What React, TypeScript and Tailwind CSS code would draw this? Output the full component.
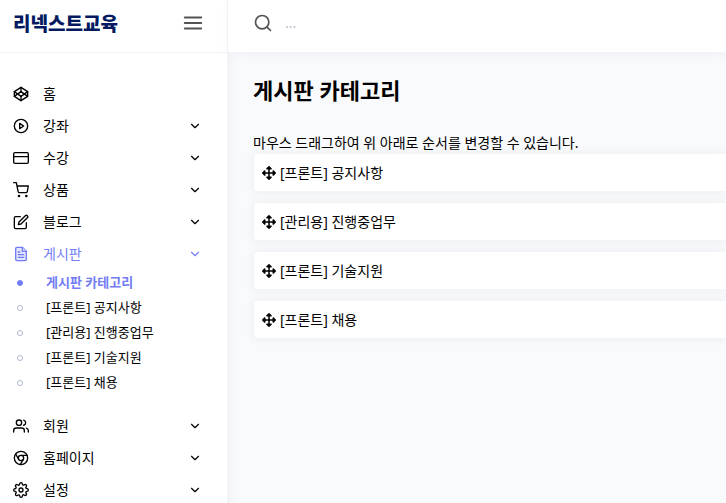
import { useState } from "react";
import type { IconType } from "react-icons";
import {
  FiChevronDown,
  FiChrome,
  FiCodepen,
  FiCreditCard,
  FiEdit,
  FiFileText,
  FiMenu,
  FiPlayCircle,
  FiSearch,
  FiSettings,
  FiShoppingCart,
  FiUsers,
} from "react-icons/fi";
import { FaArrowsAlt } from "react-icons/fa";
import clsx from "clsx";

interface MenuItem {
  label: string;
  icon: IconType;
  expandable?: boolean;
  children?: string[];
}

const boards = [
  "[프론트] 공지사항",
  "[관리용] 진행중업무",
  "[프론트] 기술지원",
  "[프론트] 채용",
];

const menu: MenuItem[] = [
  { label: "홈", icon: FiCodepen },
  { label: "강좌", icon: FiPlayCircle, expandable: true },
  { label: "수강", icon: FiCreditCard, expandable: true },
  { label: "상품", icon: FiShoppingCart, expandable: true },
  { label: "블로그", icon: FiEdit, expandable: true },
  {
    label: "게시판",
    icon: FiFileText,
    expandable: true,
    children: ["게시판 카테고리", ...boards],
  },
  { label: "회원", icon: FiUsers, expandable: true },
  { label: "홈페이지", icon: FiChrome, expandable: true },
  { label: "설정", icon: FiSettings, expandable: true },
];

function SidebarItem({ item }: { item: MenuItem }) {
  const Icon = item.icon;
  const active = !!item.children;

  return (
    <li>
      <a
        href="#"
        className={clsx(
          "flex h-8 items-center text-sm",
          active ? "text-[#727cf5]" : "text-black",
        )}
      >
        <Icon className={clsx("size-4", active && "fill-[#e3e5fd]")} />
        <span className="ml-3.5 flex-1">{item.label}</span>
        {item.expandable && <FiChevronDown className="size-3.5" />}
      </a>
      {item.children && (
        <ul className="pb-[15px]">
          {item.children.map((child, i) => (
            <li key={child}>
              <a
                href="#"
                className={clsx(
                  "flex h-[25px] items-center gap-[23px] pl-1 text-[13px]",
                  i === 0 ? "font-bold text-[#727cf5]" : "text-black",
                )}
              >
                <span
                  className={clsx(
                    "size-1.5 rounded-full border",
                    i === 0 ? "border-[#727cf5] bg-[#727cf5]" : "border-[#b1b8cf]",
                  )}
                />
                {child}
              </a>
            </li>
          ))}
        </ul>
      )}
    </li>
  );
}

export default function App() {
  const [keyword, setKeyword] = useState("");

  return (
    <div className="flex min-h-screen bg-[#f9fafb] font-['Noto_Sans','Noto_Sans_CJK_KR',sans-serif] text-sm text-black">
      {/* Sidebar */}
      <aside className="h-screen w-57 shrink-0 overflow-hidden border-r border-[#f2f4f9] bg-white shadow-[0_8px_10px_0_rgba(183,192,206,0.2)]">
        <div className="flex h-[53px] items-center justify-between border-b border-[#f2f4f9] pr-[23px] pl-[13px] pb-1.5">
          <a
            href="#"
            className="font-['Noto_Sans_CJK_KR',sans-serif] text-[19px] font-black text-[#031a61]"
          >
            리넥스트교육
          </a>
          <button type="button" aria-label="메뉴" className="text-[#535353]">
            <FiMenu className="size-[22px]" />
          </button>
        </div>
        <nav className="pt-[25px] pr-[25px] pl-[13px]">
          <ul>
            {menu.map((item) => (
              <SidebarItem key={item.label} item={item} />
            ))}
          </ul>
        </nav>
      </aside>

      <div className="min-w-0 flex-1">
        {/* Top bar */}
        <header className="flex h-[53px] items-center border-b border-[#f2f4f9] bg-white px-[25px] pb-1.5 shadow-[3px_0_10px_0_rgba(183,192,206,0.2)]">
          <label htmlFor="search" aria-label="검색" className="text-[#535353]">
            <FiSearch className="size-5" />
          </label>
          <input
            id="search"
            value={keyword}
            onChange={(e) => setKeyword(e.target.value)}
            placeholder="..."
            className="ml-3 min-w-0 flex-1 outline-none placeholder:text-[#b7c0ce]"
          />
        </header>

        {/* Content */}
        <main className="pt-[23px] pb-6 pl-[25px]">
          <h1 className="text-[22px] leading-7 font-bold">게시판 카테고리</h1>
          <p className="mt-[29px]">마우스 드래그하여 위 아래로 순서를 변경할 수 있습니다.</p>
          <ul className="space-y-2.5">
            {boards.map((board) => (
              <li
                key={board}
                draggable
                className="flex h-[39px] cursor-move items-center gap-1 rounded-l border border-r-0 border-[#f2f4f9] bg-white px-2 shadow-[0_0_10px_0_rgba(183,192,206,0.2)]"
              >
                <FaArrowsAlt className="size-3.5" />
                {board}
              </li>
            ))}
          </ul>
        </main>
      </div>
    </div>
  );
}
